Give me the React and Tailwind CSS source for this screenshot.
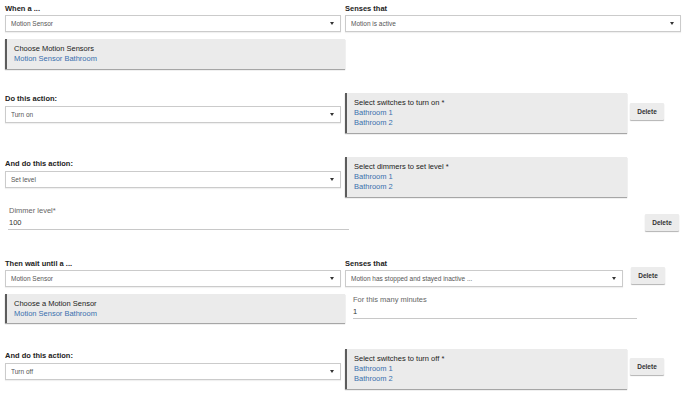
import React from "react";

// small building blocks for the rule editor
const Label = ({ children, className = "" }) => (
  <div className={"text-[7.5px] leading-[12px] font-bold text-[#222] " + className}>{children}</div>
);

const Select = ({ value, className = "" }) => (
  <div
    className={
      "h-[17px] border border-[#cbcbcb] bg-white flex items-center pl-[5px] pr-[6px] text-[6.5px] text-[#555] shadow-[0_1px_1px_rgba(0,0,0,0.06)] " +
      className
    }
  >
    <span className="flex-1 truncate">{value}</span>
    <span className="w-0 h-0 border-l-[2.5px] border-r-[2.5px] border-t-[3px] border-l-transparent border-r-transparent border-t-[#333]" />
  </div>
);

const Picker = ({ title, items, className = "" }) => (
  <div
    className={
      "bg-[#ebebeb] border-l-2 border-[#5c5c5c] shadow-[0_1px_1px_rgba(0,0,0,0.35)] pl-[7px] pt-[5px] text-[7.5px] leading-[10px] " +
      className
    }
  >
    <div className="text-[#222]">{title}</div>
    {items.map((item, index) => (
      <div className="text-[#3a70ae]" key={index}>
        {item}
      </div>
    ))}
  </div>
);

const DeleteBtn = ({ className = "" }) => (
  <div
    className={
      "w-[34px] h-[17px] bg-[#ececec] rounded-[1px] shadow-[0_1px_1px_rgba(0,0,0,0.3)] flex items-center justify-center text-[6.5px] font-bold text-[#333] " +
      className
    }
  >
    Delete
  </div>
);

const TextField = ({ label, value, className = "" }) => (
  <div className={"border-b border-[#c8c8c8] " + className}>
    <div className="text-[7.5px] leading-[12px] text-[#666]">{label}</div>
    <div className="text-[7.5px] leading-[10px] text-[#333] mt-[1px] pb-[1px]">{value}</div>
  </div>
);

const bathrooms = ["Bathroom 1", "Bathroom 2"];

export default function App() {
  return (
    <div className="w-[690px] h-[402px] bg-white px-[5px] pt-[3px] overflow-hidden font-['Liberation_Sans',Arial,sans-serif]">
      {/* trigger */}
      <div className="flex gap-[4px]">
        <div className="w-[336px]">
          <Label>When a ...</Label>
          <Select value="Motion Sensor" />
        </div>
        <div className="w-[336px]">
          <Label>Senses that</Label>
          <Select value="Motion is active" />
        </div>
      </div>
      <Picker
        title="Choose Motion Sensors"
        items={["Motion Sensor Bathroom"]}
        className="w-[340px] h-[30px] mt-[7px]"
      />

      {/* first action */}
      <div className="flex items-start mt-[24px]">
        <div className="w-[336px]">
          <Label>Do this action:</Label>
          <Select value="Turn on" className="mt-[1px]" />
        </div>
        <Picker
          title="Select switches to turn on *"
          items={bathrooms}
          className="w-[282px] h-[40px] ml-[4px]"
        />
        <DeleteBtn className="ml-[3px] mt-[10px]" />
      </div>

      {/* second action */}
      <div className="flex items-start mt-[24px]">
        <div className="w-[336px] pt-[1px]">
          <Label>And do this action:</Label>
          <Select value="Set level" className="mt-[1px]" />
        </div>
        <Picker
          title="Select dimmers to set level *"
          items={bathrooms}
          className="w-[282px] h-[40px] ml-[4px]"
        />
      </div>

      <div className="flex items-start mt-[8px]">
        <TextField label="Dimmer level*" value="100" className="w-[341px] ml-[3px] pl-[1px]" />
        <DeleteBtn className="ml-auto mr-[6px] mt-[9px]" />
      </div>

      {/* wait */}
      <div className="flex items-start mt-[27px]">
        <div className="w-[336px]">
          <Label>Then wait until a ...</Label>
          <Select value="Motion Sensor" />
        </div>
        <div className="w-[278px] ml-[4px]">
          <Label>Senses that</Label>
          <Select value="Motion has stopped and stayed inactive ..." />
        </div>
        <DeleteBtn className="ml-[8px] mt-[9px]" />
      </div>

      <div className="flex items-start mt-[7px]">
        <Picker
          title="Choose a Motion Sensor"
          items={["Motion Sensor Bathroom"]}
          className="w-[340px] h-[29px]"
        />
        <TextField label="For this many minutes" value="1" className="w-[284px] ml-[8px]" />
      </div>

      {/* last action */}
      <div className="flex items-start mt-[26px]">
        <div className="w-[336px] pt-[1px]">
          <Label>And do this action:</Label>
          <Select value="Turn off" className="mt-[1px]" />
        </div>
        <Picker
          title="Select switches to turn off *"
          items={bathrooms}
          className="w-[282px] h-[40px] ml-[4px]"
        />
        <DeleteBtn className="ml-[3px] mt-[9px]" />
      </div>
    </div>
  );
}
